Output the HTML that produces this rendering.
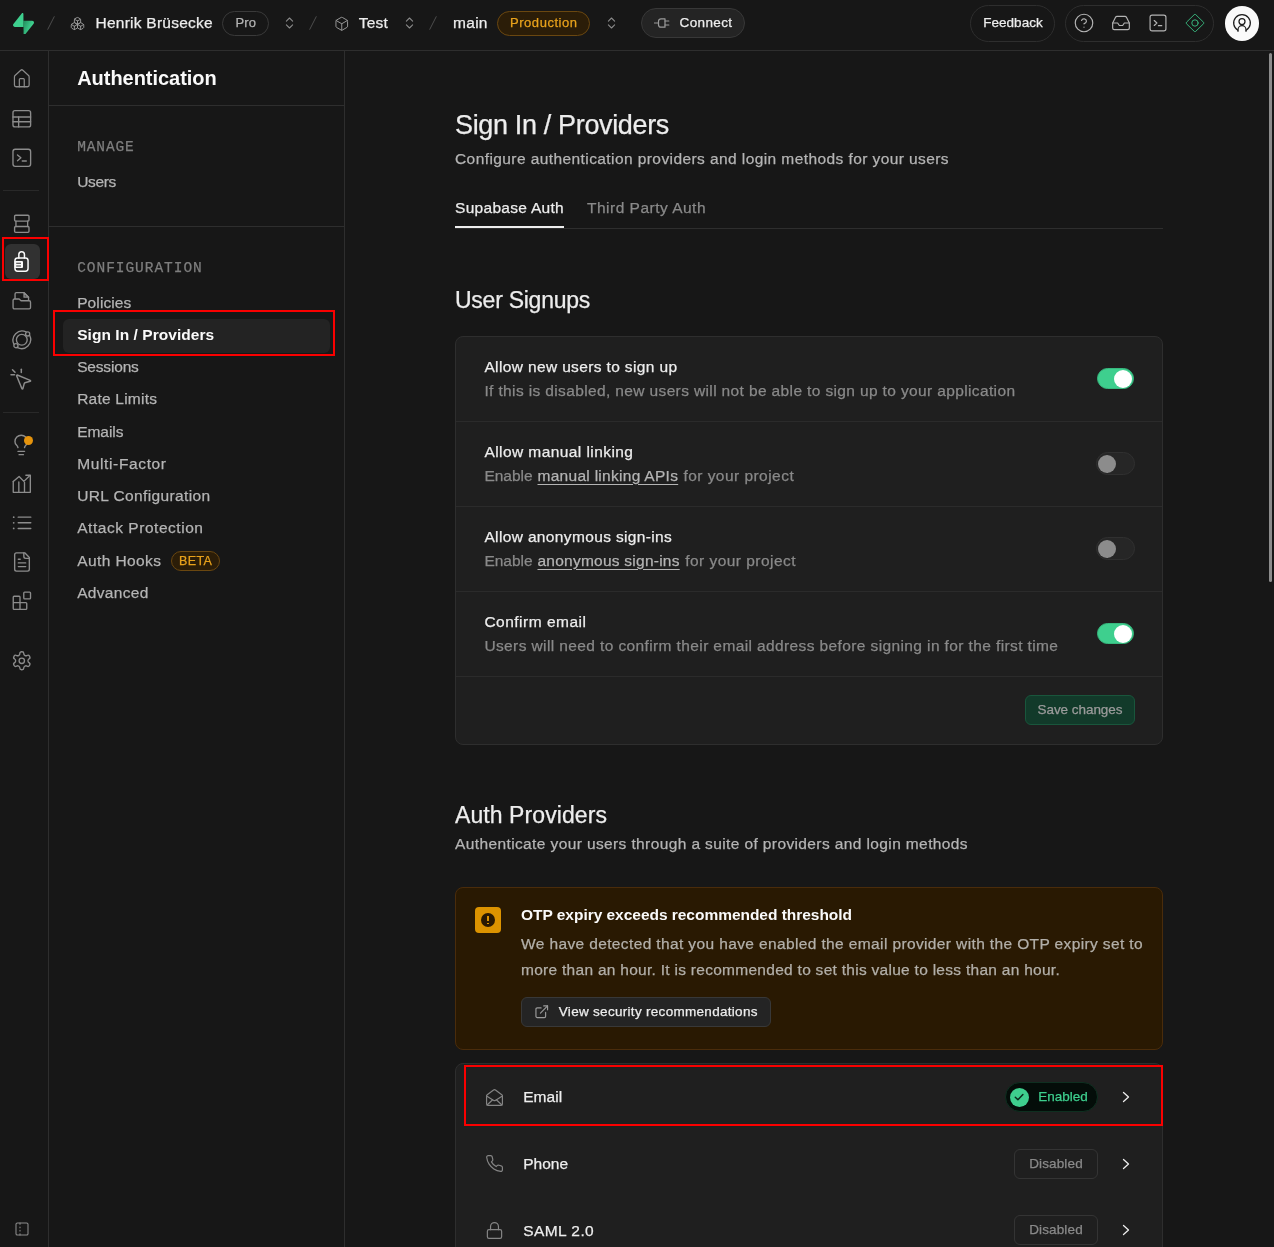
<!DOCTYPE html>
<html lang="en">
<head>
<meta charset="utf-8">
<title>Sign In / Providers | Supabase</title>
<style>
*{box-sizing:border-box;margin:0;padding:0}
html,body{width:1274px;height:1247px;overflow:hidden;background:#171717;color:#ededed;
  font-family:"Liberation Sans",sans-serif;-webkit-font-smoothing:antialiased}
.abs{position:absolute}
svg{display:block}
.ic{fill:none;stroke:currentColor;stroke-linecap:round;stroke-linejoin:round}
#hdr{position:absolute;left:0;top:0;width:1274px;height:51px;border-bottom:1px solid #2e2e2e;will-change:transform}
.t{position:absolute;white-space:nowrap;line-height:1;-webkit-text-stroke:.250px}
.t u{text-decoration-thickness:1px;text-underline-offset:2.500px;text-decoration-skip-ink:auto}
#ibar{position:absolute;left:0;top:51px;width:49px;height:1196px;border-right:1px solid #2e2e2e;will-change:transform}
#side{position:absolute;left:49px;top:51px;width:296px;height:1196px;border-right:1px solid #2e2e2e;overflow:hidden;will-change:transform}
#main{position:absolute;left:345px;top:51px;width:929px;height:1196px;overflow:hidden;will-change:transform}
.red{position:absolute;border:2.400px solid #fa0000;pointer-events:none}
.mono{font-family:"Liberation Mono",monospace}
</style>
</head>
<body>
<div id="hdr">
<svg class="abs" style="left:12.500px;top:12.500px" width="21" height="21.800" viewBox="0 0 109 113"><defs><linearGradient id="lg0" x1="53.970" y1="54.970" x2="94.160" y2="71.830" gradientUnits="userSpaceOnUse"><stop stop-color="#249361"/><stop offset="1" stop-color="#3ECF8E"/></linearGradient></defs><path d="M63.7076 110.284C60.8481 113.885 55.0502 111.912 54.9813 107.314L53.9738 40.0627L99.1935 40.0627C107.384 40.0627 111.952 49.5228 106.859 55.9374L63.7076 110.284Z" fill="url(#lg0)"/><path d="M45.317 2.07103C48.1765 -1.53037 53.9745 0.442937 54.0434 5.041L54.4849 72.2922H9.83113C1.64038 72.2922 -2.92775 62.8321 2.1655 56.4175L45.317 2.07103Z" fill="#3ECF8E"/></svg>
<svg class="abs ic" style="left:42.8px;top:14.3px;color:#4d4d4d" width="16" height="18" viewBox="0 0 16 18" stroke-width="1"><path d="M4.800 15.300 11.200 2.700"/></svg>
<svg class="abs ic" style="left:305.3px;top:14.3px;color:#4d4d4d" width="16" height="18" viewBox="0 0 16 18" stroke-width="1"><path d="M4.800 15.300 11.200 2.700"/></svg>
<svg class="abs ic" style="left:425.3px;top:14.3px;color:#4d4d4d" width="16" height="18" viewBox="0 0 16 18" stroke-width="1"><path d="M4.800 15.300 11.200 2.700"/></svg>
<svg class="abs ic" style="left:70.4px;top:15.7px;color:#9a9a9a" width="15" height="15" viewBox="0 0 24 24" stroke-width="1.5"><path d="M2.970 12.920A2 2 0 0 0 2 14.630v3.240a2 2 0 0 0 .97 1.710l3 1.800a2 2 0 0 0 2.060 0L12 19v-5.500l-5-3-4.030 2.420Z"/><path d="m7 16.500-4.740-2.850"/><path d="m7 16.500 5-3"/><path d="M7 16.500v5.170"/><path d="M12 13.500V19l3.970 2.380a2 2 0 0 0 2.060 0l3-1.800a2 2 0 0 0 .97-1.710v-3.240a2 2 0 0 0-.97-1.710L17 10.500l-5 3Z"/><path d="m17 16.500-5-3"/><path d="m17 16.500 4.740-2.850"/><path d="M17 16.500v5.170"/><path d="M7.970 4.420A2 2 0 0 0 7 6.130v4.370l5 3 5-3V6.130a2 2 0 0 0-.97-1.710l-3-1.800a2 2 0 0 0-2.060 0l-3 1.800Z"/><path d="M12 8 7.260 5.150"/><path d="m12 8 4.740-2.850"/><path d="M12 13.500V8"/></svg>
<span class="t" style="left:95.5px;top:15.23px;font-size:15.5px;color:#ededed;letter-spacing:0.252px">Henrik Brüsecke</span>
<div class="abs" style="left:222px;top:10.5px;width:47px;height:25.5px;border-radius:13px;border:1px solid #3a3a3a"></div>
<span class="t" style="left:235.4px;top:16.45px;font-size:13px;color:#b4b4b4;letter-spacing:0.122px">Pro</span>
<svg class="abs ic" style="left:282.3px;top:15.2px;color:#8a8a8a" width="15" height="16" viewBox="0 0 24 24" stroke-width="1.7"><path d="m7 15 5 5 5-5"/><path d="m7 9 5-5 5 5"/></svg>
<svg class="abs ic" style="left:401.5px;top:15.2px;color:#8a8a8a" width="15" height="16" viewBox="0 0 24 24" stroke-width="1.7"><path d="m7 15 5 5 5-5"/><path d="m7 9 5-5 5 5"/></svg>
<svg class="abs ic" style="left:603.7px;top:15.2px;color:#8a8a8a" width="15" height="16" viewBox="0 0 24 24" stroke-width="1.7"><path d="m7 15 5 5 5-5"/><path d="m7 9 5-5 5 5"/></svg>
<svg class="abs ic" style="left:334px;top:15.6px;color:#9a9a9a" width="15.5" height="15.5" viewBox="0 0 24 24" stroke-width="1.5"><path d="M21 8a2 2 0 0 0-1-1.730l-7-4a2 2 0 0 0-2 0l-7 4A2 2 0 0 0 3 8v8a2 2 0 0 0 1 1.730l7 4a2 2 0 0 0 2 0l7-4A2 2 0 0 0 21 16Z"/><path d="m3.300 7 8.700 5 8.700-5"/><path d="M12 22V12"/></svg>
<span class="t" style="left:358.7px;top:15.23px;font-size:15.5px;color:#ededed;letter-spacing:0.191px">Test</span>
<span class="t" style="left:453px;top:15.23px;font-size:15.5px;color:#ededed;letter-spacing:0.298px">main</span>
<div class="abs" style="left:497px;top:10.5px;width:93px;height:25.5px;border-radius:13px;border:1px solid #6a4710;background:#2b1d08"></div>
<span class="t" style="left:510px;top:16.45px;font-size:13px;color:#e8a21c;letter-spacing:0.544px">Production</span>
<div class="abs" style="left:641px;top:8px;width:104px;height:30px;border-radius:15px;border:1px solid #383838;background:#242424"></div>
<svg class="abs ic" style="left:654px;top:16.3px;color:#9a9a9a" width="16" height="14" viewBox="0 0 16 14" stroke-width="1.2"><path d="M.500 7H4.500"/><path d="M11 2.800H7A2.500 2.500 0 0 0 4.500 5.300v3.400A2.500 2.500 0 0 0 7 11.200h4z"/><path d="M11 5h3.800"/><path d="M11 9h3.800"/></svg>
<span class="t" style="left:679.6px;top:16.21px;font-size:13.5px;color:#ededed;letter-spacing:0.358px">Connect</span>
<div class="abs" style="left:970px;top:5px;width:85px;height:36.5px;border-radius:19px;border:1px solid #2e2e2e"></div>
<span class="t" style="left:983.2px;top:16.21px;font-size:13.5px;color:#ededed;letter-spacing:0.038px">Feedback</span>
<div class="abs" style="left:1065px;top:5px;width:149px;height:36.5px;border-radius:19px;border:1px solid #2e2e2e"></div>
<svg class="abs ic" style="left:1074.3px;top:13.2px;color:#b4b4b4" width="20" height="20" viewBox="0 0 24 24" stroke-width="1.4"><circle cx="12" cy="12" r="10.500"/><path d="M9.090 9a3 3 0 0 1 5.830 1c0 2-3 3-3 3"/><path d="M12 17h.01"/></svg>
<svg class="abs ic" style="left:1111px;top:13.2px;color:#b4b4b4" width="20" height="20" viewBox="0 0 24 24" stroke-width="1.4"><polyline points="22 12 16 12 14 15 10 15 8 12 2 12"/><path d="M5.450 5.110 2 12v6a2 2 0 0 0 2 2h16a2 2 0 0 0 2-2v-6l-3.450-6.890A2 2 0 0 0 16.760 4H7.240a2 2 0 0 0-1.790 1.110z"/></svg>
<svg class="abs ic" style="left:1148px;top:13.2px;color:#b4b4b4" width="20" height="20" viewBox="0 0 24 24" stroke-width="1.4"><path d="m7.500 9 3.200 3-3.200 3"/><path d="M12.500 15.200h4"/><rect width="19" height="19" x="2.500" y="2.500" rx="2.500"/></svg>
<svg class="abs ic" style="left:1183.8px;top:12.2px;color:#3ecf8e;opacity:.85" width="22" height="22" viewBox="0 0 22 22" stroke-width="1.0"><path d="M10.300 2.600a1 1 0 0 1 1.400 0l7.900 7.700a1 1 0 0 1 0 1.400l-7.900 7.700a1 1 0 0 1-1.400 0l-7.900-7.700a1 1 0 0 1 0-1.400z"/><circle cx="11" cy="11" r="3.200"/></svg>
<div class="abs" style="left:1224.5px;top:6.2px;width:34.6px;height:34.6px;border-radius:50%;background:#fafafa"></div>
<svg class="abs ic" style="left:1231.8px;top:13.4px;color:#1c1c1c" width="20" height="20" viewBox="0 0 24 24" stroke-width="1.5"><path d="M7 20.660A10 10 0 1 1 17 20.660"/><path d="M7.200 22v-2a4.800 4.800 0 0 1 9.600 0v2"/><circle cx="12" cy="10.200" r="3.600"/></svg>
</div>
<div id="ibar">
<svg class="abs ic" style="left:12.200px;top:17.300px;color:#8c8c8c" width="19.600" height="21.400" viewBox="0 0 24 24" preserveAspectRatio="none" stroke-width="1.500"><path d="M15 21v-8a1 1 0 0 0-1-1h-4a1 1 0 0 0-1 1v8"/><path d="M3 10a2 2 0 0 1 .709-1.528l7-5.999a2 2 0 0 1 2.582 0l7 5.999A2 2 0 0 1 21 10v9a2 2 0 0 1-2 2H5a2 2 0 0 1-2-2z"/></svg>
<svg class="abs ic" style="left:10.8px;top:56.8px;color:#8c8c8c" width="21.6" height="21.6" viewBox="0 0 24 24" stroke-width="1.5"><rect x="2.200" y="3" width="19.600" height="18" rx="2.200"/><path d="M2.200 10h19.600"/><path d="M2.200 15.300h19.600"/><path d="M8.500 10v11"/></svg>
<svg class="abs ic" style="left:10.8px;top:95.7px;color:#8c8c8c" width="21.6" height="21.6" viewBox="0 0 24 24" stroke-width="1.5"><rect x="2.200" y="2.500" width="19.600" height="19" rx="2.500"/><path d="m7.200 8.800 3.800 3.200-3.800 3.200"/><path d="M12.500 15.600h4.500"/></svg>
<div class="abs" style="left:3px;top:138.5px;width:36px;height:1px;background:#292929"></div>
<svg class="abs ic" style="left:10.8px;top:161.8px;color:#8c8c8c" width="21.6" height="21.6" viewBox="0 0 24 24" stroke-width="1.5"><rect x="4" y="2.500" width="16" height="6.500" rx="1.200"/><rect x="4" y="15" width="16" height="6.500" rx="1.200"/><path d="M5.500 9v6M18.500 9v6"/></svg>
<div class="abs" style="left:5px;top:192.5px;width:34.5px;height:35px;border-radius:6px;background:#313131"></div>
<svg class="abs ic" style="left:10px;top:197px;color:#fafafa" width="24" height="26" viewBox="0 0 24 26" stroke-width="1.500"><rect x="4.950" y="9.950" width="13.100" height="13.200" rx="2.600"/><path d="M8.850 9.950V6.450a2.800 2.800 0 0 1 5.600 0V9.950"/><path d="M4.500 13h7.500a1 1 0 0 1 1 1v5.100a1 1 0 0 1-1 1H4.500z" fill="#fafafa" stroke="none"/><path d="M6.200 15.300h4.800M6.200 18h4.800" stroke="#313131" stroke-width="1.100" stroke-linecap="butt"/></svg>
<svg class="abs ic" style="left:10.8px;top:239.4px;color:#8c8c8c" width="21.6" height="21.6" viewBox="0 0 24 24" stroke-width="1.5"><path d="M4.500 9.500V4.500a1.500 1.500 0 0 1 1.500-1.500h8.500l5 5v3.500"/><path d="M14.500 3v5h5z" fill="currentColor" fill-opacity=".35"/><path d="M2.300 11.500a1.500 1.500 0 0 1 1.500-1.500H9l2.200 2h9a1.500 1.500 0 0 1 1.500 1.500v6a1.500 1.500 0 0 1-1.500 1.500H3.800a1.500 1.500 0 0 1-1.500-1.500z"/></svg>
<svg class="abs ic" style="left:11.0px;top:278.2px;color:#8c8c8c" width="21.6" height="21.6" viewBox="0 0 24 24" stroke-width="1.5"><circle cx="12" cy="12" r="6"/><path d="M16.800 3.200A10.200 10.200 0 0 0 3.200 16.800"/><path d="M7.200 20.800A10.200 10.200 0 0 0 20.800 7.200"/><circle cx="18.500" cy="5.500" r="2.300"/><circle cx="5.500" cy="18.500" r="2.300"/></svg>
<svg class="abs ic" style="left:9.2px;top:315.8px;color:#8c8c8c" width="24" height="24" viewBox="0 0 24 24" stroke-width="1.5"><path d="M12.300 2.300v3.200"/><path d="M2 7.800h3.500"/><path d="M3.500 2.800 6 5.300"/><path d="M7.600 8.700a.5.500 0 0 1 .65-.65l13 5.300a.5.500 0 0 1-.06.950l-5.200 1.400a1 1 0 0 0-.7.700l-1.400 5.200a.5.500 0 0 1-.95.060z"/></svg>
<div class="abs" style="left:3px;top:360.5px;width:36px;height:1px;background:#292929"></div>
<svg class="abs ic" style="left:10.05px;top:382.55px;color:#8c8c8c" width="22.5" height="22.5" viewBox="0 0 24 24" stroke-width="1.5"><path d="M15.500 14.500c.2-1.100.8-1.900 1.600-2.700 1.100-1 1.600-2.400 1.600-3.800A6.700 6.700 0 0 0 5.300 8c0 1.100.2 2.400 1.600 3.800.8.800 1.400 1.600 1.600 2.700"/><path d="M8.500 18.500h7"/><path d="M9.700 22h4.600"/></svg>
<div class="abs" style="left:24px;top:384.5px;width:9.2px;height:9.2px;border-radius:50%;background:#e5930c"></div>
<svg class="abs ic" style="left:10.9px;top:422.0px;color:#8c8c8c" width="21.6" height="21.6" viewBox="0 0 24 24" stroke-width="1.5"><path d="M2.500 9.500 9 3.800l5.300 5.500L21 2.800"/><path d="M16.500 2.500h5v5"/><path d="M2.500 9.500v12h19V8"/><path d="M8.700 10v11.500"/><path d="M15 10.500v11"/></svg>
<svg class="abs ic" style="left:10.8px;top:461.0px;color:#8c8c8c" width="21.6" height="21.6" viewBox="0 0 24 24" stroke-width="1.5"><path d="M3 12h.01M3 18.300h.01M3 5.700h.01" stroke-width="2"/><path d="M8 12h14"/><path d="M8 18.300h14"/><path d="M8 5.700h14"/></svg>
<svg class="abs ic" style="left:10.6px;top:500.2px;color:#8c8c8c" width="22" height="22" viewBox="0 0 24 24" stroke-width="1.5"><path d="M15 2H6a2 2 0 0 0-2 2v16a2 2 0 0 0 2 2h12a2 2 0 0 0 2-2V7Z"/><path d="M14 2v4a2 2 0 0 0 2 2h4"/><path d="M10 9H8"/><path d="M16 13H8"/><path d="M16 17H8"/></svg>
<svg class="abs ic" style="left:10.8px;top:539.2px;color:#8c8c8c" width="21.6" height="21.6" viewBox="0 0 24 24" stroke-width="1.5"><rect width="7.500" height="7.500" x="14.200" y="2.300" rx="1"/><path d="M10 21.500V8a1 1 0 0 0-1-1H3.500a1 1 0 0 0-1 1v12.500a1 1 0 0 0 1 1h13a1 1 0 0 0 1-1v-5.500a1 1 0 0 0-1-1h-14"/></svg>
<svg class="abs ic" style="left:10.8px;top:598.8px;color:#8c8c8c" width="21.6" height="21.6" viewBox="0 0 24 24" stroke-width="1.5"><path d="M12.220 2h-.44a2 2 0 0 0-2 2v.18a2 2 0 0 1-1 1.730l-.43.250a2 2 0 0 1-2 0l-.15-.08a2 2 0 0 0-2.730.730l-.22.380a2 2 0 0 0 .730 2.730l.15.100a2 2 0 0 1 1 1.720v.510a2 2 0 0 1-1 1.740l-.15.090a2 2 0 0 0-.730 2.730l.22.380a2 2 0 0 0 2.730.730l.15-.08a2 2 0 0 1 2 0l.43.250a2 2 0 0 1 1 1.730V20a2 2 0 0 0 2 2h.44a2 2 0 0 0 2-2v-.18a2 2 0 0 1 1-1.730l.43-.250a2 2 0 0 1 2 0l.15.080a2 2 0 0 0 2.730-.730l.22-.390a2 2 0 0 0-.730-2.730l-.15-.08a2 2 0 0 1-1-1.740v-.5a2 2 0 0 1 1-1.740l.15-.09a2 2 0 0 0 .730-2.730l-.22-.380a2 2 0 0 0-2.730-.730l-.15.080a2 2 0 0 1-2 0l-.43-.250a2 2 0 0 1-1-1.730V4a2 2 0 0 0-2-2z"/><circle cx="12" cy="12" r="3"/></svg>
<svg class="abs ic" style="left:13.5px;top:1170.0px;color:#8c8c8c" width="16" height="16" viewBox="0 0 24 24" stroke-width="1.6"><rect width="18" height="18" x="3" y="3" rx="2"/><path d="M9 14v1"/><path d="M9 19v2"/><path d="M9 3v2"/><path d="M9 9v1"/></svg>
</div>
<div id="side"><div class="abs" style="left:-49px;top:-51px;width:345px;height:1247px">
<span class="t" style="left:77.2px;top:68.03px;font-size:20px;color:#fafafa;font-weight:700;-webkit-text-stroke:0;letter-spacing:-0.036px">Authentication</span>
<div class="abs" style="left:49px;top:105px;width:295px;height:1px;background:#2e2e2e"></div>
<span class="t mono" style="left:77.2px;top:140.32px;font-size:14.5px;color:#7e7e7e;letter-spacing:0.880px">MANAGE</span>
<span class="t" style="left:77.2px;top:174.33px;font-size:15.5px;color:#b4b4b4;letter-spacing:-0.357px">Users</span>
<div class="abs" style="left:49px;top:226px;width:295px;height:1px;background:#2e2e2e"></div>
<span class="t mono" style="left:77.2px;top:261.02px;font-size:14.5px;color:#7e7e7e;letter-spacing:0.952px">CONFIGURATION</span>
<span class="t" style="left:77.2px;top:294.73px;font-size:15.5px;color:#b4b4b4;letter-spacing:0.097px">Policies</span>
<div class="abs" style="left:63px;top:319px;width:267px;height:33.5px;border-radius:6px;background:#232323"></div>
<span class="t" style="left:77.2px;top:326.96px;font-size:15.5px;color:#fafafa;font-weight:700;-webkit-text-stroke:0;letter-spacing:0.048px">Sign In / Providers</span>
<span class="t" style="left:77.2px;top:359.19px;font-size:15.5px;color:#b4b4b4;letter-spacing:-0.176px">Sessions</span>
<span class="t" style="left:77.2px;top:391.42px;font-size:15.5px;color:#b4b4b4;letter-spacing:0.224px">Rate Limits</span>
<span class="t" style="left:77.2px;top:423.65px;font-size:15.5px;color:#b4b4b4;letter-spacing:-0.036px">Emails</span>
<span class="t" style="left:77.2px;top:455.88px;font-size:15.5px;color:#b4b4b4;letter-spacing:0.639px">Multi-Factor</span>
<span class="t" style="left:77.2px;top:488.11px;font-size:15.5px;color:#b4b4b4;letter-spacing:0.374px">URL Configuration</span>
<span class="t" style="left:77.2px;top:520.34px;font-size:15.5px;color:#b4b4b4;letter-spacing:0.537px">Attack Protection</span>
<span class="t" style="left:77.2px;top:552.57px;font-size:15.5px;color:#b4b4b4;letter-spacing:0.406px">Auth Hooks</span>
<div class="abs" style="left:170.6px;top:550.54px;width:49.2px;height:20px;border-radius:10px;border:1px solid #6a4710;background:#2b1d08"></div>
<span class="t" style="left:179px;top:554.83px;font-size:12.5px;color:#e8a21c;letter-spacing:0.366px">BETA</span>
<span class="t" style="left:77.2px;top:584.80px;font-size:15.5px;color:#b4b4b4;letter-spacing:0.318px">Advanced</span>
</div></div>
<div id="main"><div class="abs" style="left:-345px;top:-51px;width:1274px;height:1247px">
<span class="t" style="left:455px;top:111.61px;font-size:27px;color:#ededed;letter-spacing:-0.348px">Sign In / Providers</span>
<span class="t" style="left:455px;top:151.03px;font-size:15.5px;color:#b4b4b4;letter-spacing:0.416px">Configure authentication providers and login methods for your users</span>
<span class="t" style="left:455px;top:199.53px;font-size:15.5px;color:#ededed;letter-spacing:0.296px">Supabase Auth</span>
<span class="t" style="left:587px;top:199.53px;font-size:15.5px;color:#898989;letter-spacing:0.491px">Third Party Auth</span>
<div class="abs" style="left:455px;top:228px;width:708px;height:1px;background:#2e2e2e"></div>
<div class="abs" style="left:455px;top:226px;width:109px;height:2px;background:#ededed"></div>
<span class="t" style="left:455px;top:289.36px;font-size:23px;color:#ededed;letter-spacing:-0.257px">User Signups</span>
<div class="abs" style="left:455px;top:336px;width:708px;height:409px;border:1px solid #2e2e2e;border-radius:8px;background:#1f1f1f"></div>
<div class="abs" style="left:456px;top:421px;width:706px;height:1px;background:#2b2b2b"></div>
<div class="abs" style="left:456px;top:506px;width:706px;height:1px;background:#2b2b2b"></div>
<div class="abs" style="left:456px;top:591px;width:706px;height:1px;background:#2b2b2b"></div>
<div class="abs" style="left:456px;top:676px;width:706px;height:1px;background:#2b2b2b"></div>
<span class="t" style="left:484.4px;top:359.03px;font-size:15.5px;color:#ededed;letter-spacing:0.365px">Allow new users to sign up</span>
<span class="t" style="left:484.4px;top:382.53px;font-size:15.5px;color:#898989;letter-spacing:0.368px">If this is disabled, new users will not be able to sign up to your application</span>
<div class="abs" style="left:1097px;top:368px;width:37px;height:21px;border-radius:11px;background:#3ecf8e;border:1px solid #37b87e"></div>
<div class="abs" style="left:1114px;top:369.5px;width:18px;height:18px;border-radius:50%;background:#fff"></div>
<span class="t" style="left:484.4px;top:444.03px;font-size:15.5px;color:#ededed;letter-spacing:0.428px">Allow manual linking</span>
<span class="t" style="left:484.4px;top:467.53px;font-size:15.5px;color:#898989;letter-spacing:-0.011px">Enable</span>
<span class="t" style="left:537.5px;top:467.53px;font-size:15.5px;color:#b4b4b4;letter-spacing:0.285px"><u>manual linking APIs</u></span>
<span class="t" style="left:683.4px;top:467.53px;font-size:15.5px;color:#898989;letter-spacing:0.463px">for your project</span>
<div class="abs" style="left:1096px;top:452px;width:39px;height:23px;border-radius:12px;background:#262626;border:1px solid #303030"></div>
<div class="abs" style="left:1098px;top:454.5px;width:18px;height:18px;border-radius:50%;background:#8c8c8c"></div>
<span class="t" style="left:484.4px;top:529.03px;font-size:15.5px;color:#ededed;letter-spacing:0.358px">Allow anonymous sign-ins</span>
<span class="t" style="left:484.4px;top:552.53px;font-size:15.5px;color:#898989;letter-spacing:-0.011px">Enable</span>
<span class="t" style="left:537.5px;top:552.53px;font-size:15.5px;color:#b4b4b4;letter-spacing:0.241px"><u>anonymous sign-ins</u></span>
<span class="t" style="left:685.2px;top:552.53px;font-size:15.5px;color:#898989;letter-spacing:0.463px">for your project</span>
<div class="abs" style="left:1096px;top:537px;width:39px;height:23px;border-radius:12px;background:#262626;border:1px solid #303030"></div>
<div class="abs" style="left:1098px;top:539.5px;width:18px;height:18px;border-radius:50%;background:#8c8c8c"></div>
<span class="t" style="left:484.4px;top:614.03px;font-size:15.5px;color:#ededed;letter-spacing:0.492px">Confirm email</span>
<span class="t" style="left:484.4px;top:637.53px;font-size:15.5px;color:#898989;letter-spacing:0.387px">Users will need to confirm their email address before signing in for the first time</span>
<div class="abs" style="left:1097px;top:623px;width:37px;height:21px;border-radius:11px;background:#3ecf8e;border:1px solid #37b87e"></div>
<div class="abs" style="left:1114px;top:624.5px;width:18px;height:18px;border-radius:50%;background:#fff"></div>
<div class="abs" style="left:1025px;top:695px;width:110px;height:30px;border-radius:6px;background:#123a2a;border:1px solid #19563c"></div>
<span class="t" style="left:1037.5px;top:703.01px;font-size:13.5px;color:#9b9b9b;letter-spacing:-0.047px">Save changes</span>
<span class="t" style="left:455px;top:804.36px;font-size:23px;color:#ededed;letter-spacing:0.081px">Auth Providers</span>
<span class="t" style="left:455px;top:835.53px;font-size:15.5px;color:#b4b4b4;letter-spacing:0.386px">Authenticate your users through a suite of providers and login methods</span>
<div class="abs" style="left:455px;top:887px;width:708px;height:163px;border:1px solid #4a2c0b;border-radius:8px;background:#291902"></div>
<div class="abs" style="left:474.9px;top:906.9px;width:26.3px;height:26.4px;border-radius:4px;background:#dc9300"></div>
<div class="abs" style="left:480.6px;top:912.7px;width:14.8px;height:14.8px;border-radius:50%;background:#291902"></div>
<div class="abs" style="left:486.9px;top:915.8px;width:2.2px;height:5.2px;background:#dc9300"></div>
<div class="abs" style="left:486.9px;top:922.6px;width:2.2px;height:1.9px;background:#dc9300"></div>
<span class="t" style="left:521px;top:906.73px;font-size:15.5px;color:#fafafa;font-weight:700;-webkit-text-stroke:0;letter-spacing:-0.031px">OTP expiry exceeds recommended threshold</span>
<span class="t" style="left:521px;top:936.23px;font-size:15.5px;color:#b2afa9;letter-spacing:0.375px">We have detected that you have enabled the email provider with the OTP expiry set to</span>
<span class="t" style="left:521px;top:962.23px;font-size:15.5px;color:#b2afa9;letter-spacing:0.279px">more than an hour. It is recommended to set this value to less than an hour.</span>
<div class="abs" style="left:521px;top:997px;width:250px;height:30px;border-radius:6px;background:#242424;border:1px solid #383838"></div>
<svg class="abs ic" style="left:533.500px;top:1003.700px;color:#9a9a9a" width="15.500" height="15.500" viewBox="0 0 24 24" stroke-width="1.800"><path d="M15 3h6v6"/><path d="M10 14 21 3"/><path d="M18 13v6a2 2 0 0 1-2 2H5a2 2 0 0 1-2-2V8a2 2 0 0 1 2-2h6"/></svg>
<span class="t" style="left:558.8px;top:1004.51px;font-size:13.5px;color:#ededed;letter-spacing:0.298px">View security recommendations</span>
<div class="abs" style="left:455px;top:1063px;width:708px;height:300px;border:1px solid #2e2e2e;border-radius:8px;background:#1f1f1f"></div>
<svg class="abs ic" style="left:484.900px;top:1087.7px;color:#858585" width="19" height="19" viewBox="0 0 24 24" stroke-width="1.5"><path d="M21.200 8.400c.5.380.8.970.8 1.600v10a2 2 0 0 1-2 2H4a2 2 0 0 1-2-2V10a2 2 0 0 1 .8-1.600l8-6a2 2 0 0 1 2.400 0l8 6Z"/><path d="m22 10-8.970 5.700a1.940 1.940 0 0 1-2.060 0L2 10"/><path d="M2.600 21.400 9.700 14.900"/><path d="M21.400 21.400 14.300 14.900"/></svg>
<span class="t" style="left:523.2px;top:1089.43px;font-size:15.5px;color:#ededed;letter-spacing:0.047px">Email</span>
<svg class="abs ic" style="left:1119.700px;top:1091.2px;color:#ededed" width="12" height="12" viewBox="0 0 12 12" stroke-width="1.300"><path d="M3.500 1.500 8.500 6 3.500 10.500"/></svg>
<div class="abs" style="left:1005px;top:1082.2px;width:93px;height:30px;border-radius:15px;background:#040d09;border:1px solid #0e2f20"></div>
<div class="abs" style="left:1009.800px;top:1087.7px;width:19px;height:19px;border-radius:50%;background:#3ecf8e"></div>
<svg class="abs ic" style="left:1013.300px;top:1091.2px;color:#0b2a1c" width="12" height="12" viewBox="0 0 12 12" stroke-width="1.500"><path d="M2.300 6.300 4.900 8.800 9.900 3.500"/></svg>
<span class="t" style="left:1038.2px;top:1090.21px;font-size:13.5px;color:#3ecf8e;letter-spacing:-0.007px">Enabled</span>
<svg class="abs ic" style="left:484.900px;top:1154.2px;color:#858585" width="19" height="19" viewBox="0 0 24 24" stroke-width="1.5"><path d="M22 16.920v3a2 2 0 0 1-2.180 2 19.790 19.790 0 0 1-8.630-3.070 19.500 19.500 0 0 1-6-6 19.790 19.790 0 0 1-3.070-8.670A2 2 0 0 1 4.110 2h3a2 2 0 0 1 2 1.720 12.840 12.840 0 0 0 .7 2.810 2 2 0 0 1-.45 2.110L8.090 9.910a16 16 0 0 0 6 6l1.270-1.270a2 2 0 0 1 2.110-.45 12.840 12.840 0 0 0 2.810.7A2 2 0 0 1 22 16.920z"/></svg>
<span class="t" style="left:523.2px;top:1155.98px;font-size:15.5px;color:#ededed;letter-spacing:0.034px">Phone</span>
<svg class="abs ic" style="left:1119.700px;top:1157.8px;color:#ededed" width="12" height="12" viewBox="0 0 12 12" stroke-width="1.300"><path d="M3.500 1.500 8.500 6 3.500 10.500"/></svg>
<div class="abs" style="left:1014px;top:1148.8px;width:84px;height:30px;border-radius:6px;border:1px solid #343434"></div>
<span class="t" style="left:1029.2px;top:1156.76px;font-size:13.5px;color:#8a8a8a;letter-spacing:0.134px">Disabled</span>
<svg class="abs ic" style="left:484.900px;top:1220.8px;color:#858585" width="19" height="19" viewBox="0 0 24 24" stroke-width="1.5"><rect width="18" height="11" x="3" y="11" rx="2" ry="2"/><path d="M7 11V7a5 5 0 0 1 10 0v4"/></svg>
<span class="t" style="left:523.2px;top:1222.53px;font-size:15.5px;color:#ededed;letter-spacing:0.438px">SAML 2.0</span>
<svg class="abs ic" style="left:1119.700px;top:1224.3px;color:#ededed" width="12" height="12" viewBox="0 0 12 12" stroke-width="1.300"><path d="M3.500 1.500 8.500 6 3.500 10.500"/></svg>
<div class="abs" style="left:1014px;top:1215.3px;width:84px;height:30px;border-radius:6px;border:1px solid #343434"></div>
<span class="t" style="left:1029.2px;top:1223.31px;font-size:13.5px;color:#8a8a8a;letter-spacing:0.134px">Disabled</span>
<div class="abs" style="left:1268.9px;top:52.8px;width:3.3px;height:529.2px;border-radius:1.650px;background:#8c8c8c"></div>
</div></div>
<div id="overlay">
<div class="red" style="left:2px;top:236.800px;width:47.300px;height:43.900px"></div>
<div class="red" style="left:53.300px;top:309.900px;width:282.150px;height:46.300px"></div>
<div class="red" style="left:464.050px;top:1064.600px;width:698.950px;height:61.800px"></div>
</div>
</body>
</html>
